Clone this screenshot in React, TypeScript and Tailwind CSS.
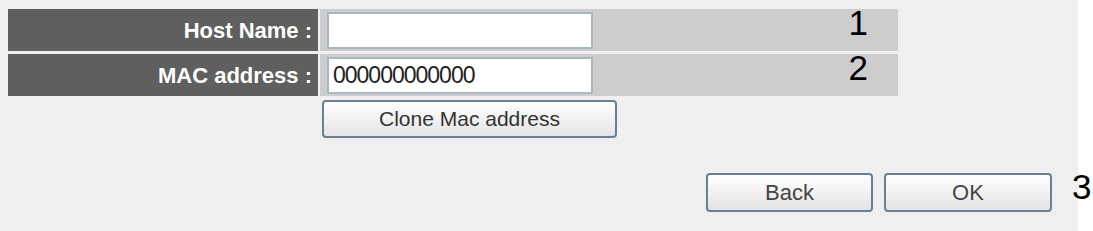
export default function App() {
  const rows = [
    { label: 'Host Name :', value: '', mark: '1' },
    { label: 'MAC address :', value: '000000000000', mark: '2' },
  ];

  return (
    <div className="w-[1093px] h-[231px] flex bg-white font-['Liberation_Sans',Arial,sans-serif] overflow-hidden">
      <div className="w-[1078px] h-full shrink-0 bg-[#efefef] pt-[9px] pl-[8px] flex flex-col">
        <div className="w-[890px] flex flex-col gap-[3px]">
          {rows.map((r) => (
            <div key={r.label} className="flex h-[42px] gap-[2px]">
              <div className="w-[310px] bg-[#5f5f5f] flex items-center justify-end pr-[6px] text-white font-bold text-[22px]">
                {r.label}
              </div>
              <div className="flex-1 bg-[#cdcdcd] flex items-center justify-between pl-[7px] pr-[30px]">
                <input
                  readOnly
                  value={r.value}
                  className="w-[266px] h-[37px] border-2 border-[#a9b6c4] bg-white px-[4px] text-[23px] text-[#222] tracking-[-1px] outline-none"
                />
                <span className="self-start -mt-[4px] text-[35px] leading-none text-black">{r.mark}</span>
              </div>
            </div>
          ))}
        </div>
        <div className="pl-[314px] mt-[4px]">
          <button className="w-[295px] h-[38px] border-2 border-[#6b7f94] rounded-[4px] bg-gradient-to-b from-white to-[#e4e4e4] text-[21px] text-[#333]">
            Clone Mac address
          </button>
        </div>
        <div className="pl-[698px] mt-[35px] flex items-start">
          <button className="shrink-0 w-[167px] h-[39px] border-2 border-[#6b7f94] rounded-[4px] bg-gradient-to-b from-white to-[#e4e4e4] text-[22px] text-[#444]">
            Back
          </button>
          <button className="shrink-0 ml-[11px] w-[168px] h-[39px] border-2 border-[#6b7f94] rounded-[4px] bg-gradient-to-b from-white to-[#e4e4e4] text-[22px] text-[#444]">
            OK
          </button>
          <span className="shrink-0 ml-[20px] -mt-[4px] text-[35px] leading-none text-black">3</span>
        </div>
      </div>
    </div>
  );
}
